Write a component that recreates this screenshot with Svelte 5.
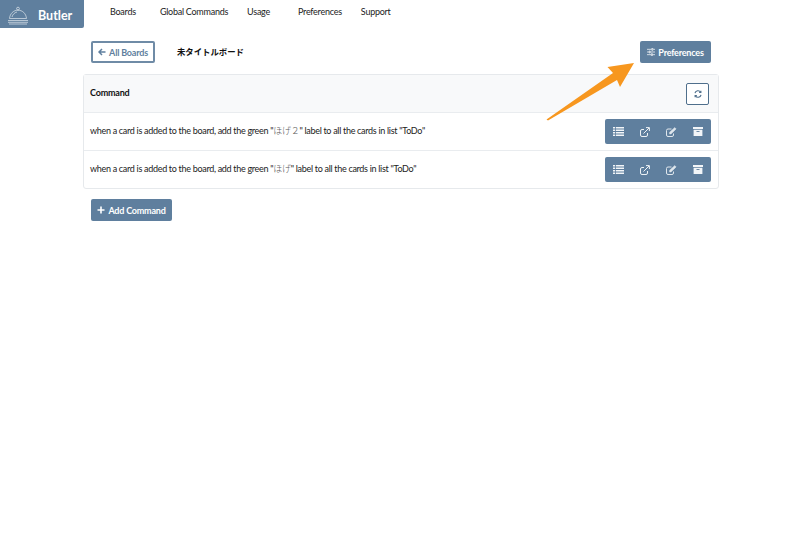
<script>
  const rows = [
    { pre: 'when a card is added to the board, add the green "', name: 'ほげ２', post: '" label to all the cards in list "ToDo"' },
    { pre: 'when a card is added to the board, add the green "', name: 'ほげ', post: '" label to all the cards in list "ToDo"' }
  ];
  const nav = ['Boards', 'Global Commands', 'Usage', 'Preferences', 'Support'];
</script>

<div class="page">
  <header class="top">
    <div class="brand">
      <svg class="bell" width="22" height="20" viewBox="0 0 22 20" fill="none" stroke="#dfe6ec" stroke-width="0.7">
        <circle cx="11" cy="2.600" r="1.400" />
        <path d="M2.500 12.500C3 7.500 6.500 4.200 11 4.200s8 3.300 8.500 8.300z" />
        <path d="M5 11C5.600 8.500 7.500 6.600 10 6" />
        <path d="M1 14.500h20M1 16.300h20M2 18h18" />
      </svg>
      <span>Butler</span>
    </div>
    <nav class="nav">
      {#each nav as item}
        <span>{item}</span>
      {/each}
    </nav>
  </header>

  <main class="main">
    <div class="toolbar">
      <button class="btn outline">
        <svg width="8" height="8" viewBox="0 0 8 8" fill="none" stroke="currentColor" stroke-width="1.500"><path d="M7.500 4H1M4 1 1 4l3 3" /></svg>
        All Boards
      </button>
      <strong class="title">未タイトルボード</strong>
      <button class="btn solid prefs">
        <svg width="8" height="8" viewBox="0 0 9 9" fill="none" stroke="currentColor" stroke-width="0.800"><path d="M0 1.500h5M7 1.500h2M0 4.500h2M4 4.500h5M0 7.500h4.500M6.500 7.500h2.500" /><path d="M5.400 .4v2.200h1.200V.4zM2.400 3.400v2.200h1.200V3.400zM4.900 6.400v2.200h1.200V6.400z" /></svg>
        Preferences
      </button>
    </div>

    <section class="card">
      <div class="row head">
        <strong class="head-label">Command</strong>
        <button class="refresh" aria-label="Refresh">
          <svg width="8" height="8" viewBox="0 0 10 10" fill="none" stroke="currentColor" stroke-width="1.400"><path d="M1.200 4A3.900 3.900 0 0 1 8.300 2.700M8.800 6A3.900 3.900 0 0 1 1.700 7.300" /><path d="M8.600 0.800v2.200H6.400M1.400 9.200V7h2.200" /></svg>
        </button>
      </div>
      {#each rows as r}
        <div class="row">
          <span class="text">{r.pre}<span class="jp">{r.name}</span>{r.post}</span>
          <div class="actions">
            <svg width="11" height="9" viewBox="0 0 11 9" fill="#f2f5f8"><path d="M0 0h2.200v1.600H0zM3 0h8v1.600H3zM0 2.400h2.200V4H0zM3 2.400h8V4H3zM0 4.900h2.200v1.600H0zM3 4.900h8v1.600H3zM0 7.400h2.200V9H0zM3 7.400h8V9H3z" /></svg>
            <svg width="10" height="10" viewBox="0 0 10 10" fill="none" stroke="#eef2f5" stroke-width="1"><path d="M7.500 6v2a1.500 1.500 0 0 1-1.500 1.500H2A1.500 1.500 0 0 1 .5 8V4A1.500 1.500 0 0 1 2 2.500h2" /><path d="M3.500 6.500 9 1M6 .6h3.400V4" /></svg>
            <svg width="11" height="10" viewBox="0 0 11 10" fill="none" stroke="#dfe6ec" stroke-width="1"><path d="M7.500 6.500V8A1.500 1.500 0 0 1 6 9.500H2A1.500 1.500 0 0 1 .5 8V3.500A1.500 1.500 0 0 1 2 2h3.500" /><path d="M3.600 5.200 8.800 .6l1.300 1.300L5 7H3.600z" fill="#dfe6ec" stroke-width="0.500" /></svg>
            <svg width="10" height="9" viewBox="0 0 10 9" fill="#f2f5f8"><path d="M0 0h10v2H0zM.6 2.700h8.800V9H.6z" /><path d="M3.500 4h3v.9h-3z" fill="#5f7f9e" /></svg>
          </div>
        </div>
      {/each}
    </section>

    <button class="btn solid add">
      <svg width="8" height="8" viewBox="0 0 8 8" fill="none" stroke="currentColor" stroke-width="1.600"><path d="M4 .5v7M.5 4h7" /></svg>
      Add Command
    </button>
  </main>

  <svg class="arrow" width="800" height="140" viewBox="0 0 800 140" aria-hidden="true">
    <path d="M546.500 119.500 613 73 607.500 67 634 63 620 87 617 80 548 120.500z" fill="#f7971f" />
  </svg>
</div>

<style>
  :global(body) {
    margin: 0;
    background: #fff;
  }
  .page {
    position: relative;
    width: 800px;
    height: 539px;
    overflow: hidden;
    font-family: Lato, "Noto Sans CJK JP", sans-serif;
    font-size: 9px;
    color: #222;
  }
  .top {
    display: flex;
    height: 28px;
  }
  .brand {
    width: 84px;
    height: 28px;
    box-sizing: border-box;
    padding: 3px 0 0 7px;
    display: flex;
    gap: 9px;
    align-items: center;
    background: #5f7f9e;
    border-bottom-right-radius: 2px;
    color: #fff;
    font-weight: 700;
    font-size: 12.500px;
  }
  .bell {
    flex: none;
  }
  .nav {
    display: flex;
    height: 22px;
    align-items: center;
    padding-left: 26px;
    gap: 24px;
    font-size: 9px;
    letter-spacing: -0.250px;
  }
  .nav span:nth-child(2) {
    margin-right: -5px;
  }
  .nav span:nth-child(3) {
    margin-right: 4px;
  }
  .nav span:nth-child(4) {
    margin-right: -5px;
  }
  .main {
    width: 636px;
    margin-left: 83px;
  }
  .toolbar {
    display: flex;
    align-items: center;
    height: 22px;
    margin-top: 13px;
    padding: 0 8px;
  }
  .btn {
    display: inline-flex;
    align-items: center;
    justify-content: center;
    gap: 3px;
    height: 22px;
    padding: 0;
    border: 0;
    border-radius: 2px;
    font-family: inherit;
    font-size: 9px;
    letter-spacing: -0.200px;
    font-weight: 700;
  }
  .outline {
    width: 64px;
    background: #fff;
    border: 2px solid #6f8ba6;
    color: #5f7f9e;
  }
  .solid {
    background: #5f7f9e;
    color: #fff;
  }
  .title {
    margin-left: 22px;
    margin-top: -2px;
    font-size: 8.400px;
    color: #111;
  }
  .prefs {
    width: 71px;
    margin-left: auto;
  }
  .card {
    margin-top: 11px;
    border: 1px solid #e6e9ec;
    border-radius: 3px;
  }
  .row {
    display: flex;
    align-items: center;
    justify-content: space-between;
    height: 38px;
    padding: 0 7px 0 6px;
    border-top: 1px solid #e9ecef;
    box-sizing: border-box;
    color: #222;
  }
  .row.head {
    height: 37px;
    border-top: 0;
    background: #f8f9fa;
    padding-right: 9px;
    font-size: 9px;
    color: #111;
  }
  .head-label {
    letter-spacing: -0.200px;
    margin-bottom: 2px;
  }
  .refresh {
    display: flex;
    align-items: center;
    justify-content: center;
    width: 23px;
    height: 22px;
    padding: 0;
    background: #fff;
    border: 1px solid #4f6f8c;
    border-radius: 2px;
    color: #4f6f8c;
  }
  .text {
    letter-spacing: -0.300px;
    margin-bottom: 2px;
  }
  .jp {
    font-family: "Noto Sans CJK JP", sans-serif;
    font-weight: 300;
    color: #555;
  }
  .actions {
    display: grid;
    grid-template-columns: repeat(4, 1fr);
    justify-items: center;
    align-items: center;
    width: 106px;
    height: 25px;
    background: #5f7f9e;
    border-radius: 2px;
  }
  .add {
    display: flex;
    width: 81px;
    height: 22px;
    margin: 10px 0 0 8px;
  }
  .arrow {
    position: absolute;
    left: 0;
    top: 0;
    pointer-events: none;
  }
</style>
